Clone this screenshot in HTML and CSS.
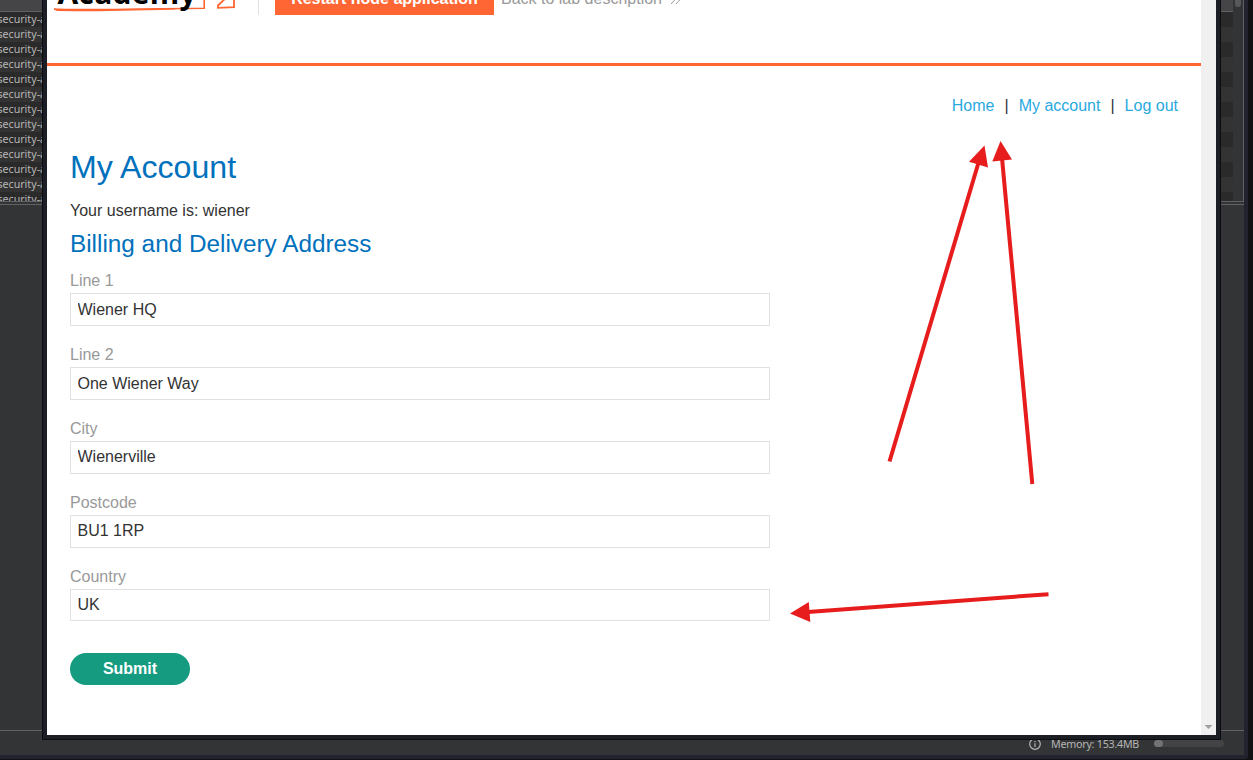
FILE: index.html
```
<!DOCTYPE html>
<html lang="en">
<head>
<meta charset="utf-8">
<title>My Account</title>
<link rel="stylesheet" href="styles.css">
</head>
<body>
<div class="desktop">
  <div class="app">
    <div class="table">
      <div class="rows">
        <div class="thead"></div>
        <div class="row">security-a</div>
        <div class="row">security-a</div>
        <div class="row">security-a</div>
        <div class="row">security-a</div>
        <div class="row">security-a</div>
        <div class="row">security-a</div>
        <div class="row">security-a</div>
        <div class="row">security-a</div>
        <div class="row">security-a</div>
        <div class="row">security-a</div>
        <div class="row">security-a</div>
        <div class="row">security-a</div>
        <div class="row">security-a</div>
      </div>
      <div class="table-scroll"><div class="table-thumb"></div></div>
    </div>
    <div class="pane"></div>
    <div class="status">
      <svg class="info" width="12" height="12" viewBox="0 0 12 12" fill="none" stroke="#b5b5b5" stroke-width="1.2"><circle cx="6" cy="6" r="5.3"/><path d="M6 5.2V9M6 3V4.2"/></svg>
      <span class="memory">Memory: 153.4MB</span>
      <div class="meter"><div class="meter-dot"></div></div>
    </div>
  </div>
</div>

<div class="window">
  <div class="page">
    <header class="lab-header">
      <svg class="logo" width="200" height="32" viewBox="0 -17 200 32">
        <path d="M7 9C30 10.800 75 8.800 157.200 8.300V-10" fill="none" stroke="#ff6633" stroke-width="1.6"/>
        <path d="M7 8.800L10 10.500C50 11 90 10 128 8.800" fill="none" stroke="#ff6633" stroke-width="1.2"/>
        <text class="logo-text" x="10.500" y="4" textLength="139">Academy</text>
        <path d="M182-5L171 5.500V7.800L187 7.200V-6" fill="none" stroke="#ff6633" stroke-width="1.8"/>
      </svg>
      <div class="rule"></div>
      <a class="restart">Restart node application</a>
      <a class="back">Back to lab description</a>
      <svg class="chevrons" width="14" height="32" viewBox="0 -17 14 32" fill="none" stroke="#999" stroke-width="1"><path d="M2-6L5.500-2L0 4M7-6L10.500-2L5 4"/></svg>
    </header>
    <main class="content">
      <nav class="nav"><a>Home</a><span>|</span><a>My account</a><span>|</span><a>Log out</a></nav>
      <h1>My Account</h1>
      <p class="user">Your username is: wiener</p>
      <h2>Billing and Delivery Address</h2>
      <form class="form">
        <label>Line 1</label><input value="Wiener HQ">
        <label>Line 2</label><input value="One Wiener Way">
        <label>City</label><input class="raised" value="Wienerville">
        <label>Postcode</label><input class="raised" value="BU1 1RP">
        <label>Country</label><input class="short" value="UK">
        <button type="button">Submit</button>
      </form>
    </main>
  </div>
  <div class="scrollbar"><div class="scroll-arrow"></div></div>
</div>

<svg class="arrows" width="1253" height="760" viewBox="0 0 1253 760">
  <g stroke="#e71d1d" stroke-width="4"><path d="M889.500 461.500L979 161M1032.300 484L1002 158M1048.500 594.200L808 612"/></g>
  <g fill="#e71d1d"><path d="M984.500 145.500L988 167.500L969 161.700Z"/><path d="M1000.500 141L1012 159.500L992.300 161.500Z"/><path d="M790 613.500L808.800 602L810.300 622Z"/></g>
</svg>
</body>
</html>
```
FILE: styles.css
```
* { box-sizing: border-box; }
body { margin: 0; height: 760px; overflow: hidden; font: 16px/20px "Liberation Sans", Arial, sans-serif; background: #121214; }

.desktop { width: 1248px; height: 759px; border: solid #23232f; border-width: 0 4px 4px 0; border-bottom-right-radius: 4px; }
.app { height: 755px; display: flex; flex-direction: column; background: #333436; font: 10.67px/15px "Noto Sans", sans-serif; color: #b5b5b5; }
.table { display: flex; height: 202px; border: solid #606163; border-width: 0 1px 1px 0; overflow: hidden; flex: none; }
.rows { flex: 1; min-width: 0; }
.thead { height: 12px; background: #454547; border-bottom: 1px solid #606163; }
.row { height: 15px; background: #333; text-indent: -2.6px; overflow: hidden; white-space: nowrap; }
.row:nth-child(even) { background: #2a2a2a; }
.table-scroll { width: 10px; padding-left: 2px; background: #333436; }
.table-thumb { width: 6px; height: 7px; background: #57585a; border-radius: 0 0 3px 3px; }
.pane { margin-top: 2px; flex: 1; border: solid #606163; border-width: 1px 0; }
.status { height: 24px; display: flex; align-items: center; padding: 1px 20px 0 0; justify-content: flex-end; }
.memory { margin: 1px 15px 0 10px; width: 88px; letter-spacing: -0.22px; white-space: nowrap; }
.meter { width: 70px; height: 7px; border-radius: 4px; background: #434345; }
.meter-dot { width: 9px; height: 7px; border-radius: 4px; background: #737375; }

.window { position: absolute; left: 42px; top: -17px; width: 1179px; height: 757px; padding: 0 4px 4px; border: solid #0b0b10; border-width: 0 1px 1px; background: #1c1e26; display: flex; }
.page { flex: 1; background: #fff; color: #333; }
.lab-header { height: 83px; display: flex; align-items: flex-start; border-bottom: 3px solid #ff6633; }
.logo { flex: none; }
.logo-text { font: bold 30px "Open Sans", sans-serif; fill: #000; }
.rule { width: 1px; height: 32px; margin: 0 16px 0 11px; background: #e0e0e0; }
.restart { width: 219px; height: 32px; line-height: 32px; text-align: center; background: #ff6633; color: #fff; font-weight: bold; white-space: nowrap; }
.back { margin-left: 7px; line-height: 32px; color: #999; white-space: nowrap; }
.chevrons { margin-left: 9px; }
.content { padding: 30px 23px 0; }
.nav { display: flex; justify-content: flex-end; gap: 10px; }
.nav a { color: #29a9e0; }
h1 { margin: 32px 0 0; font-size: 32.15px; line-height: 38px; font-weight: normal; color: #0071bc; }
.user { margin: 15px 0 0; }
h2 { margin: 8px 0 0; font-size: 24.32px; line-height: 29px; font-weight: normal; color: #0071bc; }
.form { width: 700px; margin-top: 13px; display: flex; flex-direction: column; }
label { height: 22px; color: #999; }
input { height: 33px; margin: 0 0 19px; padding: 0 6.5px; border: 1px solid #e1e1e1; font: 16px "Liberation Sans", Arial, sans-serif; color: #333; background: #fff; }
.raised { padding-bottom: 2px; }
.short { height: 32px; padding-bottom: 1px; margin-bottom: 20px; }
button { width: 120px; height: 32px; margin-top: 12px; border: 0; border-radius: 16px; background: #159b80; color: #fff; font: bold 16px "Liberation Sans", Arial, sans-serif; }
.scrollbar { width: 15px; background: #f0f0f0; display: flex; align-items: flex-end; justify-content: center; padding-bottom: 6px; }
.scroll-arrow { width: 8px; height: 4px; background: #a0a0a0; clip-path: polygon(0 0, 100% 0, 50% 100%); }
.arrows { position: absolute; left: 0; top: 0; pointer-events: none; }
```
